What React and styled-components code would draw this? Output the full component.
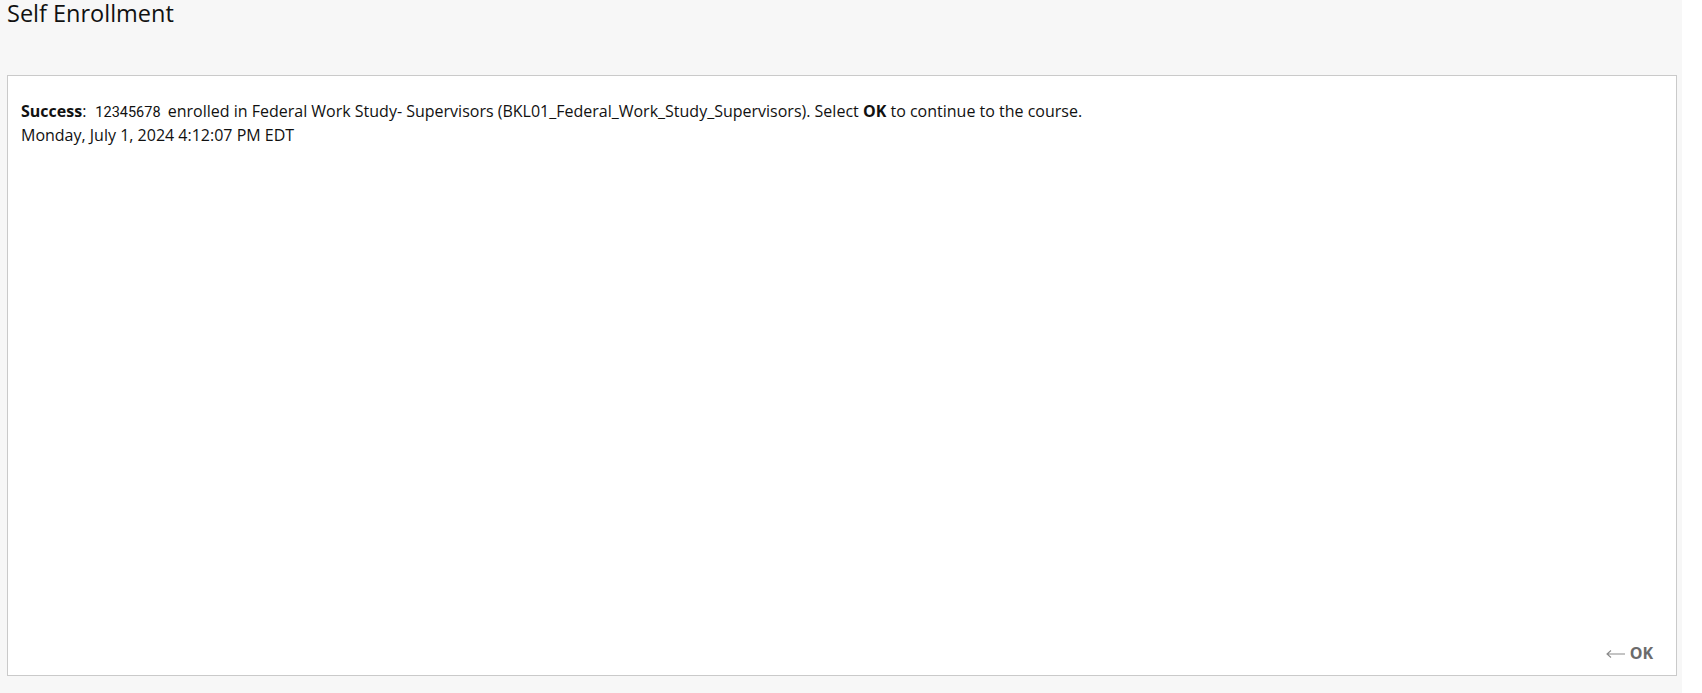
import React from 'react';
import styled, { createGlobalStyle } from 'styled-components';

const GlobalStyle = createGlobalStyle`
  html, body {
    margin: 0;
    padding: 0;
    background: #fff;
  }
  body {
    font-family: "Open Sans", "Liberation Sans", sans-serif;
    color: #000;
  }
`;

const Page = styled.div`
  width: 1682px;
  height: 693px;
  box-sizing: border-box;
  background-color: #f7f7f7;
  display: flex;
  flex-direction: column;
  padding: 0 5px 17px 7px;
`;

const Title = styled.h1`
  margin: 0;
  font-size: 23.5px;
  font-weight: 400;
  line-height: 26px;
  color: #111;
  height: 75px;
`;

const Panel = styled.div`
  flex: 1;
  display: flex;
  flex-direction: column;
  background: #fff;
  border: 1px solid #cacaca;
  padding: 24px 14px 11px 13px;
`;

const Message = styled.div`
  flex: 1;
  font-size: 16px;
  line-height: 22px;
  color: #111;
`;

const Label = styled.strong`
  font-weight: 700;
`;

const UserId = styled.span`
  font-family: Roboto, "Liberation Sans", sans-serif;
  font-size: 14.5px;
  margin: 0 3px 0 9px;
`;

const Footer = styled.div`
  display: flex;
  justify-content: flex-end;
  padding-right: 9px;
`;

const OkButton = styled.button`
  display: flex;
  align-items: center;
  gap: 5px;
  border: 0;
  background: none;
  padding: 0;
  font-family: "Open Sans", "Liberation Sans", sans-serif;
  font-size: 16px;
  font-weight: 700;
  color: #6b6b6b;
  cursor: pointer;
`;

const Arrow = styled.svg`
  width: 19px;
  height: 10px;
  margin-top: 2px;
  color: #8a8a8a;
`;

const BackArrow = () => (
  <Arrow viewBox="0 0 19 10" fill="none" stroke="currentColor" strokeWidth="1.1">
    <path d="M1 5h18M5 1.5L1 5l4 3.5" />
  </Arrow>
);

const App = () => (
  <>
    <GlobalStyle />
    <Page>
      <Title>Self Enrollment</Title>
      <Panel>
        <Message>
          <Label>Success</Label>:<UserId>12345678</UserId> enrolled in Federal Work Study- Supervisors
          (BKL01_Federal_Work_Study_Supervisors). Select <Label>OK</Label> to continue to the course.
          <br />
          Monday, July 1, 2024 4:12:07 PM EDT
        </Message>
        <Footer>
          <OkButton>
            <BackArrow />
            OK
          </OkButton>
        </Footer>
      </Panel>
    </Page>
  </>
);

export default App;
